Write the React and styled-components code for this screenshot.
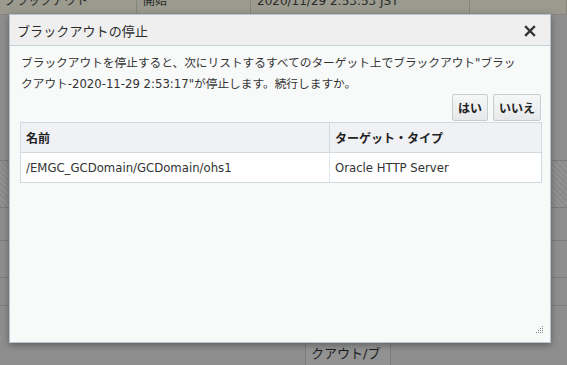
import React from 'react'
import styled, { createGlobalStyle } from 'styled-components'

const GlobalStyle = createGlobalStyle`
  html, body {
    margin: 0;
    padding: 0;
    background: #8e8e8e;
  }
  body {
    font-family: "DejaVu Sans", "Noto Sans CJK JP", sans-serif;
  }
`

const cjk = `"DejaVu Sans", "Noto Sans CJK JP", sans-serif`

const Page = styled.div`
  position: relative;
  width: 567px;
  height: 365px;
  overflow: hidden;
  background: #8e8e8e;
`

const BgTable = styled.div`
  display: flex;
  flex-direction: column;
`

const TopRow = styled.div`
  display: grid;
  grid-template-columns: 137px 114px 219px 1fr;
  height: 14px;
  background: #9a9a8f;
  border-bottom: 1px solid #85857c;
  overflow: hidden;
`

const TopCell = styled.div`
  border-right: 1px solid #85857c;
  padding-left: ${p => p.$pad || 4}px;
  font-family: ${cjk};
  font-size: 12px;
  line-height: 12px;
  color: #2a2a28;
  margin-top: -5px;
  white-space: nowrap;
`

const BgRow = styled.div`
  height: ${p => p.$h}px;
  border-bottom: 1px solid #7c7c7c;
  background: ${p => p.$hatch
    ? 'repeating-linear-gradient(45deg, #8a8a8a 0 2px, #929292 2px 4px)'
    : '#8e8e8e'};
`

const LastRow = styled.div`
  display: flex;
  height: 60px;
  padding-left: 305px;
`

const BgCell = styled.div`
  width: 79px;
  border-left: 1px solid #7c7c7c;
  border-right: 1px solid #7c7c7c;
  background: #929292;
  font-family: ${cjk};
  font-size: 13px;
  line-height: 18px;
  color: #1c1c1c;
  padding: 21px 0 0 5px;
  white-space: nowrap;
`

const Dialog = styled.div`
  position: absolute;
  left: 9px;
  top: 14px;
  width: 540px;
  height: 327px;
  border: 1px solid #b9c3cc;
  background: #f8f9f9;
  box-shadow: 0 2px 7px rgba(0, 0, 0, 0.35);
  display: flex;
  flex-direction: column;
`

const Header = styled.div`
  height: 30px;
  display: flex;
  align-items: center;
  justify-content: space-between;
  padding: 0 14px 0 7px;
  background: #efefef;
  border-bottom: 1px solid #c6d1da;
`

const Title = styled.div`
  font-family: ${cjk};
  font-size: 13px;
  color: #2b2b2b;
  letter-spacing: 0.1px;
  padding-top: 1px;
`

const Close = styled.svg`
  width: 12px;
  height: 12px;
  margin-top: 1px;
`

const Body = styled.div`
  flex: 1;
  padding: 7px 8px 0 10px;
  display: flex;
  flex-direction: column;
`

const Message = styled.div`
  font-family: ${cjk};
  font-size: 11.7px;
  line-height: 21px;
  color: #333;
  padding-left: 1px;
  white-space: nowrap;
`

const Actions = styled.div`
  display: flex;
  justify-content: flex-end;
  gap: 5px;
  margin-top: -1px;
  padding-right: 1px;
`

const Button = styled.button`
  height: 27px;
  padding: 0 5px;
  min-width: ${p => p.$w}px;
  border: 1px solid #c8cdd1;
  border-radius: 2px;
  background: linear-gradient(#f6f7f7, #e6e8ea);
  font-family: ${cjk};
  font-size: 12px;
  font-weight: bold;
  color: #222;
`

const Table = styled.div`
  margin-top: 1px;
  border: 1px solid #d3dbe2;
  display: grid;
  grid-template-columns: 309px 1fr;
  background: #fff;
`

const Th = styled.div`
  height: 29px;
  display: flex;
  align-items: center;
  padding-left: 5px;
  background: #f0f1f4;
  border-bottom: 1px solid #d3dbe2;
  border-right: ${p => p.$last ? 'none' : '1px solid #d3dbe2'};
  font-family: ${cjk};
  font-size: 12px;
  font-weight: bold;
  color: #222;
`

const Td = styled.div`
  height: 29px;
  display: flex;
  align-items: center;
  padding-left: 5px;
  border-right: ${p => p.$last ? 'none' : '1px solid #e2e7eb'};
  font-family: ${cjk};
  font-size: 11.7px;
  color: #333;
`

const Grip = styled.svg`
  position: absolute;
  right: 6px;
  bottom: 8px;
  width: 8px;
  height: 8px;
`

function GripDots() {
  const dots = []
  for (let r = 0; r < 4; r++) {
    for (let c = 3 - r; c < 4; c++) {
      dots.push(<rect key={r + '-' + c} x={c * 2} y={r * 2} width="1" height="1" fill="#888" />)
    }
  }
  return <Grip viewBox="0 0 8 8">{dots}</Grip>
}

export default function App() {
  return (
    <Page>
      <GlobalStyle />
      <BgTable>
        <TopRow>
          <TopCell>ブラックアウト</TopCell>
          <TopCell $pad={6}>開始</TopCell>
          <TopCell $pad={6}>2020/11/29 2:53:53 JST</TopCell>
          <TopCell />
        </TopRow>
        <BgRow $h={145} />
        <BgRow $h={46} $hatch />
        <BgRow $h={32} />
        <BgRow $h={36} />
        <BgRow $h={27} />
        <LastRow>
          <BgCell>ト・ブラッ<br />クアウト/ブ</BgCell>
        </LastRow>
      </BgTable>

      <Dialog>
        <Header>
          <Title>ブラックアウトの停止</Title>
          <Close viewBox="0 0 12 12">
            <path d="M2 2 L10 10 M10 2 L2 10" stroke="#333" strokeWidth="2.4" strokeLinecap="square" />
          </Close>
        </Header>
        <Body>
          <Message>
            ブラックアウトを停止すると、次にリストするすべてのターゲット上でブラックアウト"ブラッ<br />
            クアウト-2020-11-29 2:53:17"が停止します。続行しますか。
          </Message>
          <Actions>
            <Button $w={35}>はい</Button>
            <Button $w={47}>いいえ</Button>
          </Actions>
          <Table>
            <Th>名前</Th>
            <Th $last>ターゲット・タイプ</Th>
            <Td>/EMGC_GCDomain/GCDomain/ohs1</Td>
            <Td $last>Oracle HTTP Server</Td>
          </Table>
        </Body>
        <GripDots />
      </Dialog>
    </Page>
  )
}
